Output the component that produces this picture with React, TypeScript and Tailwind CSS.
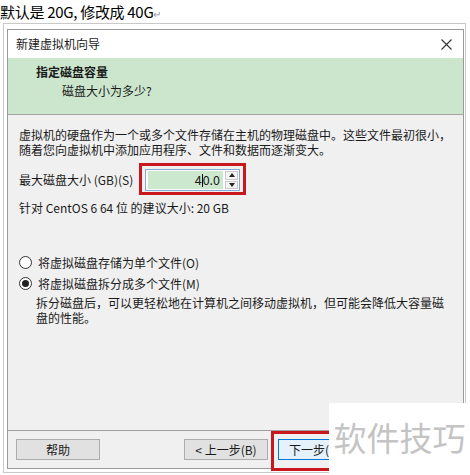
import React from "react";

const F = { fontFamily: '"Noto Sans CJK SC", "Noto Sans", sans-serif' };

function Radio({ checked }: { checked?: boolean }) {
  return (
    <div className="w-[13px] h-[13px] rounded-full border border-[#333] bg-white flex items-center justify-center shrink-0">
      {checked && <div className="w-[7px] h-[7px] rounded-full bg-[#222]" />}
    </div>
  );
}

export default function App() {
  return (
    <div className="w-[470px] h-[475px] bg-white relative overflow-hidden text-[#1a1a1a]" style={F}>
      <div className="h-[23px] text-[15px] leading-[23px] text-black pl-[0px] tracking-[-0.3px]">
        默认是 20G, 修改成 40G<span className="text-[10px] text-[#999]">↵</span>
      </div>
      <div className="ml-[3px] w-[463px] h-[450px] border border-[#c9c9c9] pl-[3px] pt-[5px]">
        <div className="w-[457px] h-[440px] border border-[#9a9a9a] flex flex-col bg-[#f0f0f0]">
          {/* title bar */}
          <div className="h-[28px] bg-white flex items-center justify-between pl-[8px] pr-[11px] shrink-0">
            <span className="text-[12px] leading-none">新建虚拟机向导</span>
            <svg width="11" height="11" viewBox="0 0 11 11">
              <path d="M0.5 0.5 L10.5 10.5 M10.5 0.5 L0.5 10.5" stroke="#333" strokeWidth="1.1" />
            </svg>
          </div>
          {/* header */}
          <div className="h-[57px] bg-[#cce6cd] border-b border-[#a3a3a3] shrink-0 pl-[28px] pt-[6px]">
            <div className="text-[12px] leading-[16px] font-bold">指定磁盘容量</div>
            <div className="text-[12px] leading-[16px] pl-[26px] pt-[3px]">磁盘大小为多少?</div>
          </div>
          {/* body */}
          <div className="flex-1 pl-[11px] pt-[12px] text-[12px]">
            <div className="leading-[15px]">虚拟机的硬盘作为一个或多个文件存储在主机的物理磁盘中。这些文件最初很小，</div>
            <div className="leading-[15px]">随着您向虚拟机中添加应用程序、文件和数据而逐渐变大。</div>
            <div className="h-[22px] mt-[12px] flex items-center relative">
              <span className="leading-none">最大磁盘大小 (GB)(S)</span>
              <div className="absolute left-[126px] top-0 w-[95px] h-[22px] border border-[#86a9d6] bg-white flex">
                <div className="flex-1 bg-[#cce8cf] my-[1px] ml-[2px] flex items-center justify-end pr-[3px] text-[12.5px]">
                  <span>4</span>
                  <span className="inline-block w-px h-[13px] bg-black" />
                  <span>0.0</span>
                </div>
                <div className="w-[13px] flex flex-col ml-[2px] mr-[1px] my-[1px] gap-[1px]">
                  <div className="flex-1 border border-[#c8c8c8] bg-[#f4f4f4] flex items-center justify-center">
                    <svg width="6" height="4" viewBox="0 0 6 4"><path d="M0 4 L3 0 L6 4 Z" fill="#222" /></svg>
                  </div>
                  <div className="flex-1 border border-[#c8c8c8] bg-[#f4f4f4] flex items-center justify-center">
                    <svg width="6" height="4" viewBox="0 0 6 4"><path d="M0 0 L3 4 L6 0 Z" fill="#222" /></svg>
                  </div>
                </div>
              </div>
              <div className="absolute left-[120px] top-[-6px] w-[107px] h-[32px] border-[3px] border-[#c8171d]" />
            </div>
            <div className="leading-[15px] mt-[9px]">针对 CentOS 6 64 位 的建议大小: 20 GB</div>
            <div className="mt-[37px] h-[21px] flex items-center gap-[6px]">
              <Radio />
              <span className="leading-none">将虚拟磁盘存储为单个文件(O)</span>
            </div>
            <div className="h-[21px] flex items-center gap-[6px]">
              <Radio checked />
              <span className="leading-none">将虚拟磁盘拆分成多个文件(M)</span>
            </div>
            <div className="pl-[17px] pt-[1px] leading-[15px]">
              <div>拆分磁盘后，可以更轻松地在计算机之间移动虚拟机，但可能会降低大容量磁</div>
              <div>盘的性能。</div>
            </div>
          </div>
          {/* footer */}
          <div className="h-[38px] border-t border-[#a0a0a0] shrink-0 flex items-start pt-[8px] pl-[8px] text-[12px] relative">
            <div className="w-[84px] h-[21px] border border-[#adadad] bg-[#e1e1e1] flex items-center justify-center leading-none">帮助</div>
            <div className="w-[84px] h-[21px] border border-[#adadad] bg-[#e1e1e1] flex items-center justify-center leading-none ml-[84px]">&lt; 上一步(B)</div>
            <div className="w-[84px] h-[21px] border border-[#0078d7] bg-[#e5f1fb] flex items-center justify-center leading-none ml-[10px]">下一步(N) &gt;</div>
            <div className="absolute left-[263px] top-[0px] w-[80px] h-[40px] border-[3px] border-[#c8171d]" />
          </div>
        </div>
      </div>
      {/* watermark */}
      <div className="absolute left-[329px] top-[403px] w-[141px] h-[72px] bg-white flex items-center justify-center">
        <span className="text-[33px] leading-none text-[#c4c4c4] tracking-[0px] -mt-[4px]">软件技巧</span>
      </div>
    </div>
  );
}
